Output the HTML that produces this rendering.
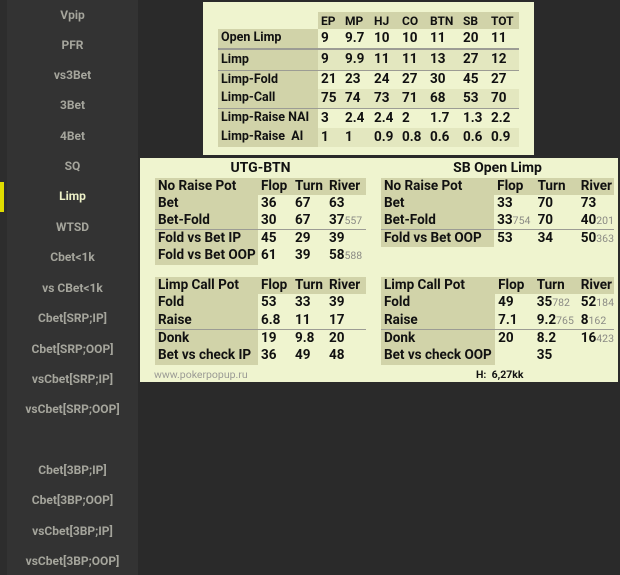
<!DOCTYPE html>
<html><head><meta charset="utf-8"><style>
*{margin:0;padding:0;box-sizing:border-box}
body{width:620px;height:575px;background:#2a2a2a;position:relative;overflow:hidden;font-family:"Roboto","Liberation Sans",sans-serif;font-weight:bold}
#side{position:absolute;left:0;top:0;width:138px;height:575px;background:#333333;border-left:7px solid #2d2d2d}
#side div{position:absolute;left:0;width:131px;text-align:center;color:#a5a59c;font-size:12px}
#sel{position:absolute;left:0;top:182px;width:4px;height:30px;background:#e0dc00}
.panel{position:absolute;background:#eff4cf}
table{border-collapse:collapse;position:absolute;font-size:13.5px;color:#111}
td{padding:0 0 0 3px;white-space:nowrap;vertical-align:middle;line-height:1}
td.l{background:#d1d3a9}
tr.h td{background:#d1d3a9}
tr.a td{background:#e3e7bf}
tr.a td.l{background:#d1d3a9}
tr.b td{border-top:2px solid #9c9c94}
tr.c td{border-top:1px solid #9c9c94}
small{font-size:10.5px;color:#8a8a84;font-weight:normal}
.t{position:absolute;font-size:14px;color:#111;text-align:center}
</style></head><body>
<div id="side">
<div style="top:8px">Vpip</div><div style="top:38px">PFR</div><div style="top:68px">vs3Bet</div>
<div style="top:98px">3Bet</div><div style="top:129px">4Bet</div><div style="top:159px">SQ</div>
<div style="top:189px;color:#eef2c8">Limp</div><div style="top:220px">WTSD</div><div style="top:250px">Cbet&lt;1k</div>
<div style="top:281px">vs CBet&lt;1k</div><div style="top:311px">Cbet[SRP;IP]</div><div style="top:342px">Cbet[SRP;OOP]</div>
<div style="top:372px">vsCbet[SRP;IP]</div><div style="top:402px">vsCbet[SRP;OOP]</div>
<div style="top:463px">Cbet[3BP;IP]</div><div style="top:493px">Cbet[3BP;OOP]</div>
<div style="top:524px">vsCbet[3BP;IP]</div><div style="top:554px">vsCbet[3BP;OOP]</div>
</div>
<div id="sel"></div>

<div class="panel" style="left:203px;top:2px;width:331px;height:153px"></div>
<table style="left:218px;top:12px;width:301px">
<colgroup><col style="width:100px"><col style="width:24px"><col style="width:29px"><col style="width:28px"><col style="width:28px"><col style="width:33px"><col style="width:28px"><col style="width:31px"></colgroup>
<tr style="height:17px"><td style="background:none"></td><td class="x" style="background:#d1d3a9;font-size:12px">EP</td><td style="background:#d1d3a9;font-size:12px">MP</td><td style="background:#d1d3a9;font-size:12px">HJ</td><td style="background:#d1d3a9;font-size:12px">CO</td><td style="background:#d1d3a9;font-size:12px">BTN</td><td style="background:#d1d3a9;font-size:12px">SB</td><td style="background:#d1d3a9;font-size:12px">TOT</td></tr>
<tr style="height:20px"><td class="l" style="font-size:12.5px">Open Limp</td><td>9</td><td>9.7</td><td>10</td><td>10</td><td>11</td><td>20</td><td>11</td></tr>
<tr class="a b" style="height:21px"><td class="l" style="font-size:12.5px">Limp</td><td>9</td><td>9.9</td><td>11</td><td>11</td><td>13</td><td>27</td><td>12</td></tr>
<tr class="c" style="height:19px"><td class="l" style="font-size:12.5px">Limp-Fold</td><td>21</td><td>23</td><td>24</td><td>27</td><td>30</td><td>45</td><td>27</td></tr>
<tr class="a" style="height:19px"><td class="l" style="font-size:12.5px">Limp-Call</td><td>75</td><td>74</td><td>73</td><td>71</td><td>68</td><td>53</td><td>70</td></tr>
<tr class="c" style="height:20px"><td class="l" style="font-size:12.5px">Limp-Raise NAI</td><td>3</td><td>2.4</td><td>2.4</td><td>2</td><td>1.7</td><td>1.3</td><td>2.2</td></tr>
<tr class="a" style="height:19px"><td class="l" style="font-size:12.5px">Limp-Raise&nbsp; AI</td><td>1</td><td>1</td><td>0.9</td><td>0.8</td><td>0.6</td><td>0.6</td><td>0.9</td></tr>
</table>

<div class="panel" style="left:140px;top:158px;width:478px;height:224px"></div>
<div class="t" style="left:155px;top:160px;width:211px">UTG-BTN</div>
<div class="t" style="left:381px;top:160px;width:233px">SB Open Limp</div>

<table style="left:155px;top:178px;width:211px">
<colgroup><col style="width:103px"><col style="width:34px"><col style="width:34px"><col style="width:40px"></colgroup>
<tr class="h" style="height:17px"><td>No Raise Pot</td><td>Flop</td><td>Turn</td><td>River</td></tr>
<tr style="height:17px"><td class="l">Bet</td><td>36</td><td>67</td><td>63</td></tr>
<tr style="height:17px"><td class="l">Bet-Fold</td><td>30</td><td>67</td><td>37<small>557</small></td></tr>
<tr class="c" style="height:18px"><td class="l">Fold vs Bet IP</td><td>45</td><td>29</td><td>39</td></tr>
<tr style="height:18px"><td class="l">Fold vs Bet OOP</td><td>61</td><td>39</td><td>58<small>588</small></td></tr>
</table>
<table style="left:155px;top:277px;width:211px">
<colgroup><col style="width:103px"><col style="width:34px"><col style="width:34px"><col style="width:40px"></colgroup>
<tr class="h" style="height:17px"><td>Limp Call Pot</td><td>Flop</td><td>Turn</td><td>River</td></tr>
<tr style="height:18px"><td class="l">Fold</td><td>53</td><td>33</td><td>39</td></tr>
<tr style="height:17px"><td class="l">Raise</td><td>6.8</td><td>11</td><td>17</td></tr>
<tr class="c" style="height:18px"><td class="l">Donk</td><td>19</td><td>9.8</td><td>20</td></tr>
<tr style="height:18px"><td class="l">Bet vs check IP</td><td>36</td><td>49</td><td>48</td></tr>
</table>

<table style="left:381px;top:178px;width:233px">
<colgroup><col style="width:115px"><col style="width:41px"><col style="width:45px"><col style="width:32px"></colgroup>
<tr class="h" style="height:17px"><td>No Raise Pot</td><td>Flop</td><td>Turn</td><td>River</td></tr>
<tr style="height:17px"><td class="l">Bet</td><td>33</td><td>70</td><td>73</td></tr>
<tr style="height:17px"><td class="l">Bet-Fold</td><td>33<small>754</small></td><td>70</td><td>40<small>201</small></td></tr>
<tr class="c" style="height:18px"><td class="l">Fold vs Bet OOP</td><td>53</td><td>34</td><td>50<small>363</small></td></tr>
</table>
<table style="left:381px;top:277px;width:233px">
<colgroup><col style="width:115px"><col style="width:41px"><col style="width:45px"><col style="width:32px"></colgroup>
<tr class="h" style="height:17px"><td>Limp Call Pot</td><td>Flop</td><td>Turn</td><td>River</td></tr>
<tr style="height:18px"><td class="l">Fold</td><td>49</td><td>35<small>782</small></td><td>52<small>184</small></td></tr>
<tr style="height:17px"><td class="l">Raise</td><td>7.1</td><td>9.2<small>765</small></td><td>8<small>162</small></td></tr>
<tr class="c" style="height:18px"><td class="l">Donk</td><td>20</td><td>8.2</td><td>16<small>423</small></td></tr>
<tr style="height:18px"><td class="l">Bet vs check OOP</td><td></td><td>35</td><td></td></tr>
</table>
<div style="position:absolute;left:154px;top:368px;font-size:10.5px;color:#9a9a94;font-weight:normal">www.pokerpopup.ru</div>
<div style="position:absolute;left:476px;top:368px;font-size:10.5px;color:#111">H:&nbsp;&nbsp;6,27kk</div>
</body></html>
